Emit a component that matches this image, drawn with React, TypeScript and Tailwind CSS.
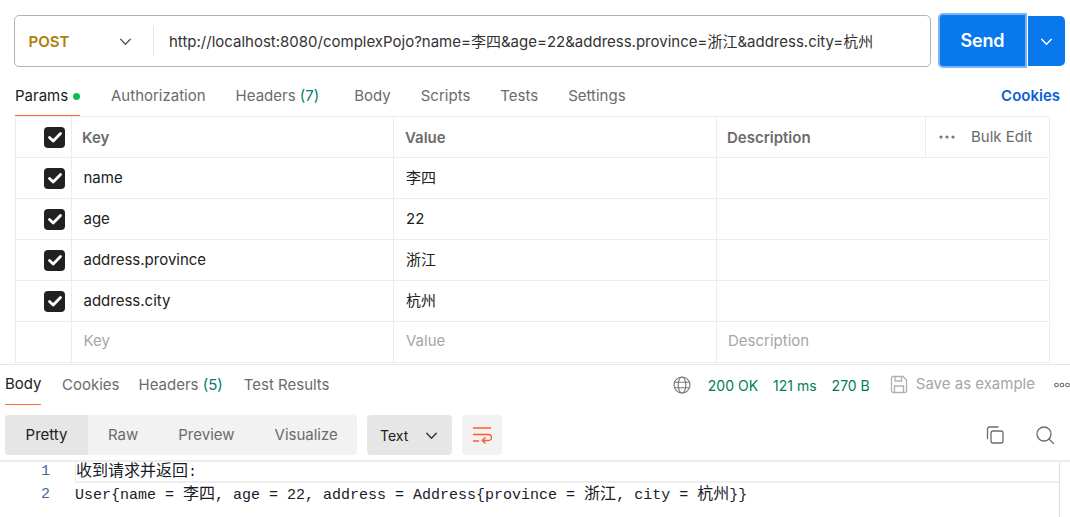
import React from "react";

const cjk = "font-['Inter','Noto_Sans_CJK_SC',sans-serif]";

function Check() {
  return (
    <div className="w-[21px] h-[21px] rounded-[4px] bg-[#212121] flex items-center justify-center">
      <svg width="16" height="16" viewBox="0 0 16 16" fill="none">
        <path d="M2.5 8.5L6.2 12L13.5 4.5" stroke="#fff" strokeWidth="2.8" strokeLinecap="round" strokeLinejoin="round" />
      </svg>
    </div>
  );
}

function Chevron({ color = "#5a5a5a", size = 15 }: { color?: string; size?: number }) {
  return (
    <svg width={size} height={size} viewBox="0 0 14 14" fill="none">
      <path d="M2.5 5L7 9.5L11.5 5" stroke={color} strokeWidth="1.3" strokeLinecap="round" strokeLinejoin="round" />
    </svg>
  );
}

function Row({ k, v, checked = true, placeholder = false, last = false }: { k: string; v: string; checked?: boolean; placeholder?: boolean; last?: boolean }) {
  const tone = placeholder ? "text-[#a6a6a6] pb-[2px]" : "text-[#212121]";
  return (
    <div className={`grid grid-cols-[56px_322px_323px_332px] ${last ? "h-[40px]" : "h-[41px] border-b border-[#ededed]"} text-[15px] ${tone}`}>
      <div className={`border-r border-[#ededed] flex items-center pl-[28px] ${last ? "-mb-[2px]" : ""}`}>{checked && <Check />}</div>
      <div className={`border-r border-[#ededed] flex items-center pl-[11.5px] ${last ? "-mb-[2px] pb-[2px]" : ""}`}>{k}</div>
      <div className={`border-r border-[#ededed] flex items-center pl-[12px] ${last ? "-mb-[2px] pb-[2px]" : ""}`}>{v}</div>
      <div className="flex items-center pl-[11px]">{placeholder ? "Description" : ""}</div>
    </div>
  );
}

function Tab({ ml, children }: { ml: string; children: React.ReactNode }) {
  return <div className={`${ml} flex items-center pt-[3px]`}>{children}</div>;
}

function Cn({ children }: { children: React.ReactNode }) {
  return <span className="text-[16px]">{children}</span>;
}

export default function App() {
  return (
    <div className={`w-[1070px] h-[517px] overflow-hidden bg-white ${cjk} text-[15px] text-[#6b6b6b]`}>
      {/* URL row */}
      <div className="flex items-start pt-[15px] pl-[14px] h-[74px]">
        <div className="w-[917px] h-[52px] border border-[#b3b3b3] rounded-[5px] flex items-center">
          <div className="w-[138px] flex items-center pl-[13.5px] pr-[20px] justify-between">
            <span className="text-[#b07d05] font-semibold text-[15px] mt-[3px]">POST</span>
            <Chevron />
          </div>
          <div className="w-px h-[30px] bg-[#e6e6e6]" />
          <div className="pl-[15px] mt-[2px] text-[#333] text-[15px] whitespace-nowrap">http://localhost:8080/complexPojo?name=李四&amp;age=22&amp;address.province=浙江&amp;address.city=杭州</div>
        </div>
        <div className="ml-[7px] w-[89px] h-[55px] -mt-[2px] rounded-l-[5px] bg-[#0a78ed] border-2 border-[#7ab6f5] flex items-center justify-center text-white font-semibold text-[18px] tracking-[-0.2px]">Send</div>
        <div className="ml-[1px] w-[37px] h-[50px] mt-[1px] rounded-r-[5px] bg-[#0a78ed] flex items-center justify-center"><Chevron color="#fff" /></div>
      </div>

      {/* Request tabs */}
      <div className="flex items-stretch h-[42px] pl-[15px] pr-[10px] whitespace-nowrap">
        <div className="w-[65px] flex items-center pt-[3px] border-b border-[#ff6c37] text-[#212121]">
          Params<span className="ml-[5px] w-[7px] h-[7px] rounded-full bg-[#0cbb52]" />
        </div>
        <Tab ml="ml-[31px]">Authorization</Tab>
        <Tab ml="ml-[30px]"><span>Headers <span className="text-[#007f6c]">(7)</span></span></Tab>
        <Tab ml="ml-[35px]">Body</Tab>
        <Tab ml="ml-[30px]">Scripts</Tab>
        <Tab ml="ml-[30px]">Tests</Tab>
        <Tab ml="ml-[30px]">Settings</Tab>
        <Tab ml="ml-auto"><span className="text-[#0b5fd8] font-semibold">Cookies</span></Tab>
      </div>

      {/* Params table */}
      <div className="ml-[15px] w-[1035px] border border-[#ededed] h-[247px]">
        <div className="grid grid-cols-[56px_322px_323px_209px_123px] h-[41px] border-b border-[#ededed] font-semibold text-[#6b6b6b]">
          <div className="border-r border-[#ededed] flex items-center pl-[28px]"><Check /></div>
          <div className="border-r border-[#ededed] flex items-center pl-[10px] pt-[2px]">Key</div>
          <div className="border-r border-[#ededed] flex items-center pl-[11px] pt-[2px]">Value</div>
          <div className="border-r border-[#ededed] flex items-center pl-[10px] pt-[2px]">Description</div>
          <div className="flex items-center pl-[13px] font-normal">
            <svg width="16" height="4" viewBox="0 0 16 4" fill="#757575"><circle cx="2" cy="2" r="1.6" /><circle cx="8" cy="2" r="1.6" /><circle cx="14" cy="2" r="1.6" /></svg>
            <span className="ml-[16px] whitespace-nowrap">Bulk Edit</span>
          </div>
        </div>
        <Row k="name" v="李四" />
        <Row k="age" v="22" />
        <Row k="address.province" v="浙江" />
        <Row k="address.city" v="杭州" />
        <Row k="Key" v="Value" checked={false} placeholder last />
      </div>

      {/* Response header */}
      <div className="border-t border-[#e6e6e6] mt-[1px] h-[41px] flex items-center pl-[5px] whitespace-nowrap">
        <div className="h-[40px] flex items-center border-b border-[#ff6c37] text-[#212121] w-[36px]">Body</div>
        <span className="ml-[21px]">Cookies</span>
        <span className="ml-[19px]">Headers <span className="text-[#007f6c]">(5)</span></span>
        <span className="ml-[21px]">Test Results</span>
        <div className="ml-auto flex items-center">
          <svg width="18" height="18" viewBox="0 0 18 18" fill="none" stroke="#777" strokeWidth="1.1">
            <circle cx="9" cy="9" r="8" /><ellipse cx="9" cy="9" rx="3.8" ry="8" /><path d="M1.5 6.2H16.5M1.5 11.8H16.5" />
          </svg>
          <span className="ml-[17px] text-[#007f4f] text-[14px]">200 OK</span>
          <span className="ml-[15px] text-[#007f4f] text-[14px]">121 ms</span>
          <span className="ml-[15px] text-[#007f4f] text-[14px]">270 B</span>
          <svg className="ml-[20px] mb-[2px]" width="18" height="19" viewBox="0 0 18 19" fill="none" stroke="#b0b0b0" strokeWidth="1.3">
            <path d="M1.5 3A1.5 1.5 0 0 1 3 1.5H13L16.5 5V16A1.5 1.5 0 0 1 15 17.5H3A1.5 1.5 0 0 1 1.5 16Z" />
            <path d="M5 1.5V6H11.5V1.5M4.5 17.5V11H13.5V17.5" />
          </svg>
          <span className="ml-[8px] mb-[2px] text-[#a6a6a6]">Save as example</span>
          <svg className="ml-[19px]" width="16" height="6" viewBox="0 0 16 6" fill="none" stroke="#6b6b6b" strokeWidth="1.1"><circle cx="2.5" cy="3" r="1.8" /><circle cx="8" cy="3" r="1.8" /><circle cx="13.5" cy="3" r="1.8" /></svg>
        </div>
      </div>

      {/* Response toolbar */}
      <div className="flex items-start h-[57px] pl-[5px] pr-[16px] border-b-2 border-[#ededed] text-[15px] pt-[10px]">
        <div className="flex h-[40px] w-[352px] rounded-[4px] bg-[#f2f2f2] overflow-hidden items-center">
          <div className="w-[83px] h-full bg-[#e6e6e6] flex items-center justify-center text-[#212121]">Pretty</div>
          <span className="ml-[20px]">Raw</span>
          <span className="ml-[40px]">Preview</span>
          <span className="ml-[40px]">Visualize</span>
        </div>
        <div className="ml-[10px] w-[85px] h-[40px] rounded-[4px] bg-[#e6e6e6] flex items-center pl-[13px] pr-[13px] justify-between text-[#212121] text-[14px]">
          Text <Chevron color="#333" />
        </div>
        <div className="ml-[10px] w-[40px] h-[40px] rounded-[4px] bg-[#f2f2f2] flex items-center justify-center">
          <svg width="20" height="18" viewBox="0 0 20 18" fill="none" stroke="#ff5a2b" strokeWidth="1.4" strokeLinecap="round" strokeLinejoin="round">
            <path d="M1.5 2H18.5M1.5 8.5H16.5A2.6 2.6 0 0 1 16.5 14.5H10.5M13 11.8L10.2 14.5L13 17M1.5 15H6.5" />
          </svg>
        </div>
        <div className="ml-auto flex items-center h-[40px]">
          <svg width="18" height="18" viewBox="0 0 18 18" fill="none" stroke="#6b6b6b" strokeWidth="1.3" strokeLinecap="round">
            <rect x="5" y="5" width="12" height="12" rx="2" /><path d="M1.5 12.5V3A2 2 0 0 1 3.5 1H12" />
          </svg>
          <svg className="ml-[32px]" width="18" height="18" viewBox="0 0 18 18" fill="none" stroke="#6b6b6b" strokeWidth="1.3" strokeLinecap="round">
            <circle cx="8" cy="8" r="7" /><path d="M13 13L17.5 17.5" />
          </svg>
        </div>
      </div>

      {/* Response code */}
      <div className="flex font-['Liberation_Mono','Noto_Sans_CJK_SC',monospace] text-[15px] text-[#1a1a2a] h-[56px]">
        <div className="w-[75px] shrink-0 text-[#3d6b9c] text-right pr-[25px]">
          <div className="h-[21px] leading-[20px]">1</div>
          <div className="leading-[24px]">2</div>
        </div>
        <div className="w-[985px] shrink-0 border-r border-[#e0e0e0] whitespace-nowrap">
          <div className="border-b-2 border-l border-[#ededed] h-[21px] leading-[20px]"><Cn>收到请求并返回</Cn>:</div>
          <div className="leading-[24px]">User&#123;name = <Cn>李四</Cn>, age = 22, address = Address&#123;province = <Cn>浙江</Cn>, city = <Cn>杭州</Cn>&#125;&#125;</div>
        </div>
      </div>
    </div>
  );
}
